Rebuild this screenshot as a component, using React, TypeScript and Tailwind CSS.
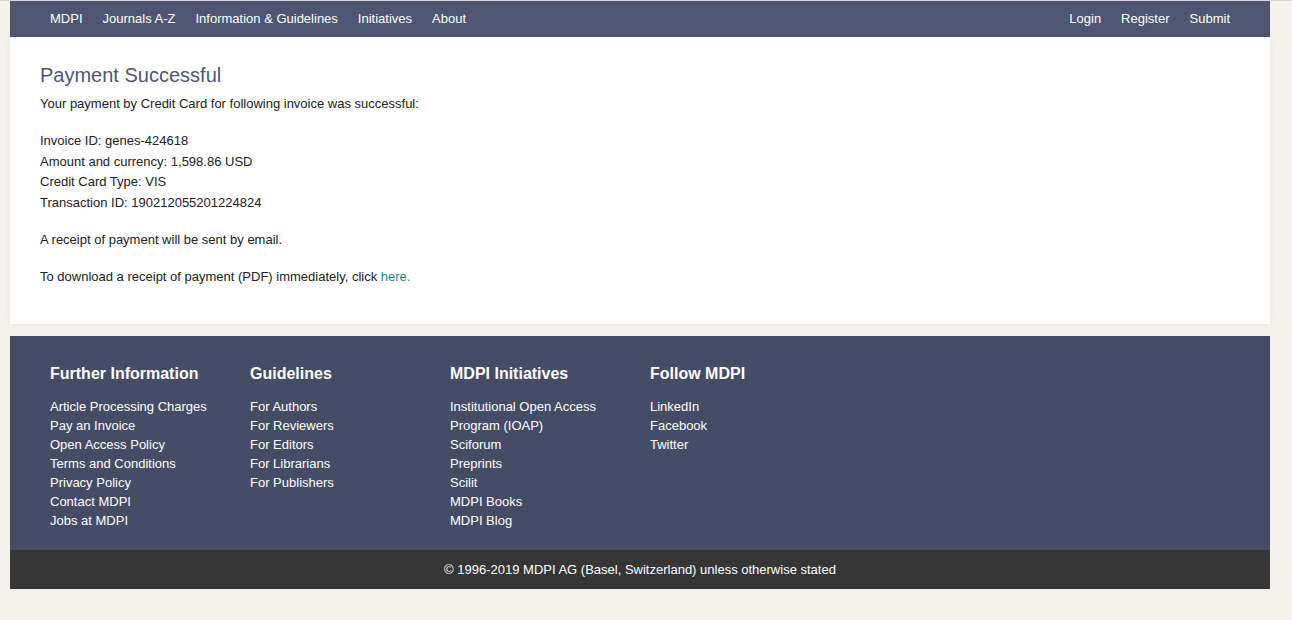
const navLeft = ['MDPI', 'Journals A-Z', 'Information & Guidelines', 'Initiatives', 'About'];
const navRight = ['Login', 'Register', 'Submit'];

const footerColumns: { title: string; links: string[] }[] = [
  {
    title: 'Further Information',
    links: [
      'Article Processing Charges',
      'Pay an Invoice',
      'Open Access Policy',
      'Terms and Conditions',
      'Privacy Policy',
      'Contact MDPI',
      'Jobs at MDPI',
    ],
  },
  {
    title: 'Guidelines',
    links: ['For Authors', 'For Reviewers', 'For Editors', 'For Librarians', 'For Publishers'],
  },
  {
    title: 'MDPI Initiatives',
    links: [
      'Institutional Open Access',
      'Program (IOAP)',
      'Sciforum',
      'Preprints',
      'Scilit',
      'MDPI Books',
      'MDPI Blog',
    ],
  },
  {
    title: 'Follow MDPI',
    links: ['LinkedIn', 'Facebook', 'Twitter'],
  },
];

export default function App() {
  return (
    <div className="min-h-[620px] bg-[#f5f1eb] border-t border-[#dadada] font-['Liberation_Sans',Arial,sans-serif] text-[#222]">
      <div className="ml-[10px] w-[1260px]">
        <nav className="h-[36px] bg-[#4f5671] flex items-center justify-between px-[40px] text-[13px] text-white">
          <div className="flex gap-[20px]">
            {navLeft.map((item) => (
              <a key={item} href="#">
                {item}
              </a>
            ))}
          </div>
          <div className="flex gap-[20px]">
            {navRight.map((item) => (
              <a key={item} href="#">
                {item}
              </a>
            ))}
          </div>
        </nav>

        <main className="bg-white shadow-[0_0_6px_rgba(0,0,0,0.06)] px-[30px] pt-[26px] pb-[37px] text-[13px] leading-[20.6px]">
          <h1 className="text-[20px] leading-[24px] text-[#4f5671] mb-[7px]">Payment Successful</h1>
          <p className="mb-[16.4px]">Your payment by Credit Card for following invoice was successful:</p>
          <p className="mb-[16.4px]">
            Invoice ID: genes-424618
            <br />
            Amount and currency: 1,598.86 USD
            <br />
            Credit Card Type: VIS
            <br />
            Transaction ID: 190212055201224824
          </p>
          <p className="mb-[16.4px]">A receipt of payment will be sent by email.</p>
          <p>
            To download a receipt of payment (PDF) immediately, click{' '}
            <a href="#" className="text-[#2b8187]">
              here.
            </a>
          </p>
        </main>

        <footer className="mt-[12px] bg-[#454c66] text-white">
          <div className="flex px-[40px] pt-[28px] pb-[20px]">
            {footerColumns.map((col) => (
              <div key={col.title} className="w-[200px]">
                <h3 className="text-[16px] leading-[20px] font-bold mb-[13px]">{col.title}</h3>
                <ul className="text-[13px] leading-[19px]">
                  {col.links.map((link) => (
                    <li key={link}>
                      <a href="#">{link}</a>
                    </li>
                  ))}
                </ul>
              </div>
            ))}
          </div>
          <div className="h-[39px] bg-[#363636] flex items-center justify-center text-[13px]">
            © 1996-2019 MDPI AG (Basel, Switzerland) unless otherwise stated
          </div>
        </footer>
      </div>
    </div>
  );
}
